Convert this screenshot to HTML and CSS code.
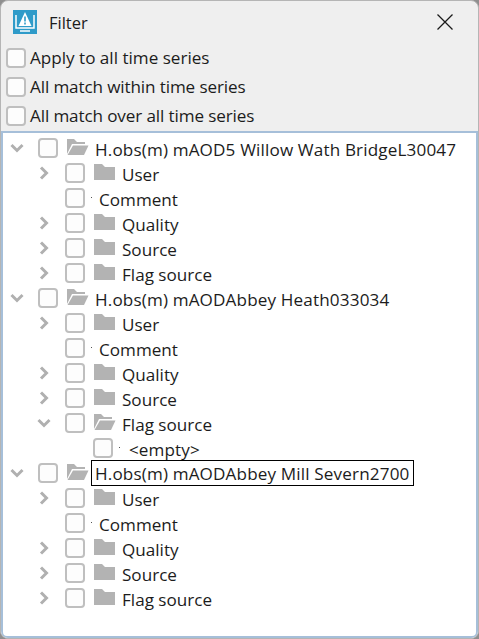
FILE: index.html
```html
<!DOCTYPE html>
<html lang="en">
<head>
    <meta charset="UTF-8">
    <title>Filter</title>
    <link rel="stylesheet" href="styles.css">
</head>
<body>
<svg width="0" height="0" class="defs">
    <symbol id="chev-right" viewBox="0 0 14 14"><path d="M4 1.500 9.500 7 4 12.500" fill="none" stroke="#b0b0b0" stroke-width="3"/></symbol>
    <symbol id="chev-down" viewBox="0 0 14 14"><path d="M1.500 4 7 9.500 12.500 4" fill="none" stroke="#b0b0b0" stroke-width="3"/></symbol>
    <symbol id="folder" viewBox="0 0 23 18"><path d="M1 1h8l3 3h10v13H1z" fill="#b3b3b3"/></symbol>
    <symbol id="folder-open" viewBox="0 0 23 18"><path d="M1 16V1h7l3 3h8v2H6z" fill="#b3b3b3"/><path d="M7 7.500h15.500L18 17H1.500z" fill="#b3b3b3"/></symbol>
</svg>
<div class="window">
    <header class="titlebar">
        <svg class="app-icon" width="24" height="24" viewBox="0 0 24 24">
            <rect width="24" height="24" fill="#2f9bc9"/>
            <path d="M3 5v13h18V5" fill="none" stroke="#fff" stroke-width="1.500"/>
            <path d="M7 21h10" stroke="#fff" stroke-width="1.500"/>
            <path d="M12 2 18.500 16h-13z" fill="#fff"/>
            <path d="M12 6.500v5M12 12.500v2" stroke="#2f9bc9" stroke-width="1.600"/>
        </svg>
        <span class="title">Filter</span>
        <svg class="close" width="16" height="16" viewBox="0 0 16 16"><path d="M.5.500l15 15M15.500.500l-15 15" stroke="#1a1a1a" stroke-width="1.300"/></svg>
    </header>

    <div class="options">
        <label class="option"><span class="check"></span>Apply to all time series</label>
        <label class="option tight"><span class="check"></span>All match within time series</label>
        <label class="option tight"><span class="check"></span>All match over all time series</label>
    </div>

    <ul class="tree">
        <li class="row lvl0"><svg class="chev"><use href="#chev-down"/></svg><span class="check"></span><svg class="folder"><use href="#folder-open"/></svg><span class="label">H.obs(m) mAOD5 Willow Wath BridgeL30047</span></li>
        <li class="row lvl1"><svg class="chev"><use href="#chev-right"/></svg><span class="check"></span><svg class="folder"><use href="#folder"/></svg><span class="label">User</span></li>
        <li class="row lvl1"><span class="chev"></span><span class="check"></span><span class="dot"></span><span class="label">Comment</span></li>
        <li class="row lvl1"><svg class="chev"><use href="#chev-right"/></svg><span class="check"></span><svg class="folder"><use href="#folder"/></svg><span class="label">Quality</span></li>
        <li class="row lvl1"><svg class="chev"><use href="#chev-right"/></svg><span class="check"></span><svg class="folder"><use href="#folder"/></svg><span class="label">Source</span></li>
        <li class="row lvl1"><svg class="chev"><use href="#chev-right"/></svg><span class="check"></span><svg class="folder"><use href="#folder"/></svg><span class="label">Flag source</span></li>

        <li class="row lvl0"><svg class="chev"><use href="#chev-down"/></svg><span class="check"></span><svg class="folder"><use href="#folder-open"/></svg><span class="label">H.obs(m) mAODAbbey Heath033034</span></li>
        <li class="row lvl1"><svg class="chev"><use href="#chev-right"/></svg><span class="check"></span><svg class="folder"><use href="#folder"/></svg><span class="label">User</span></li>
        <li class="row lvl1"><span class="chev"></span><span class="check"></span><span class="dot"></span><span class="label">Comment</span></li>
        <li class="row lvl1"><svg class="chev"><use href="#chev-right"/></svg><span class="check"></span><svg class="folder"><use href="#folder"/></svg><span class="label">Quality</span></li>
        <li class="row lvl1"><svg class="chev"><use href="#chev-right"/></svg><span class="check"></span><svg class="folder"><use href="#folder"/></svg><span class="label">Source</span></li>
        <li class="row lvl1"><svg class="chev"><use href="#chev-down"/></svg><span class="check"></span><svg class="folder"><use href="#folder-open"/></svg><span class="label">Flag source</span></li>
        <li class="row lvl2"><span class="check"></span><span class="dot"></span><span class="label">&lt;empty&gt;</span></li>

        <li class="row lvl0"><svg class="chev"><use href="#chev-down"/></svg><span class="check"></span><svg class="folder"><use href="#folder-open"/></svg><span class="label selected">H.obs(m) mAODAbbey Mill Severn2700</span></li>
        <li class="row lvl1"><svg class="chev"><use href="#chev-right"/></svg><span class="check"></span><svg class="folder"><use href="#folder"/></svg><span class="label">User</span></li>
        <li class="row lvl1"><span class="chev"></span><span class="check"></span><span class="dot"></span><span class="label">Comment</span></li>
        <li class="row lvl1"><svg class="chev"><use href="#chev-right"/></svg><span class="check"></span><svg class="folder"><use href="#folder"/></svg><span class="label">Quality</span></li>
        <li class="row lvl1"><svg class="chev"><use href="#chev-right"/></svg><span class="check"></span><svg class="folder"><use href="#folder"/></svg><span class="label">Source</span></li>
        <li class="row lvl1"><svg class="chev"><use href="#chev-right"/></svg><span class="check"></span><svg class="folder"><use href="#folder"/></svg><span class="label">Flag source</span></li>
    </ul>
</div>
</body>
</html>
```

FILE: styles.css
```css
html, body {
    margin: 0;
    height: 100%;
    background: #8f8f8f;
}
body {
    font-family: "Open Sans", "Noto Sans", sans-serif;
    font-size: 17.1px;
    color: #1c1c1c;
    overflow: hidden;
}
.defs {
    position: absolute;
}
.window {
    height: 639px;
    box-sizing: border-box;
    background: #efefef;
    border: 1px solid #b5b5b5;
    border-radius: 8px;
    display: flex;
    flex-direction: column;
    overflow: hidden;
}
.titlebar {
    height: 42px;
    flex: none;
    display: flex;
    align-items: center;
    padding: 0 25px 0 12px;
}
.title {
    margin-left: 12px;
    flex: 1;
    font-size: 16.500px;
}
.options {
    flex: none;
    padding: 0 0 1px 5px;
}
.option {
    height: 29px;
    display: flex;
    align-items: center;
    gap: 4px;
}
.tight {
    letter-spacing: -.12px;
}
.check {
    width: 20px;
    height: 20px;
    flex: none;
    box-sizing: border-box;
    background: #fdfdfd;
    border: 2px solid #bfbfbf;
    border-radius: 4px;
}
.tree {
    flex: 1;
    list-style: none;
    margin: 0;
    padding: 2px 0 0;
    background: #fff;
    border: 2px solid #a6bfd9;
    border-radius: 0 0 6px 6px;
}
.row {
    height: 25px;
    display: flex;
    align-items: center;
}
.lvl0 { padding-left: 7px; }
.lvl1 { padding-left: 34px; }
.lvl2 { padding-left: 90px; }
.chev {
    width: 14px;
    height: 14px;
    flex: none;
    margin-right: 14px;
}
.folder {
    width: 23px;
    height: 18px;
    flex: none;
    margin-left: 8px;
    margin-bottom: 1px;
}
.dot {
    width: 1px;
    height: 1px;
    flex: none;
    margin: 0 0 0 6px;
    background: #555;
}
.label {
    margin-left: 7px;
    padding-top: 4px;
    white-space: nowrap;
}
.folder + .label {
    margin-left: 6px;
}
.lvl0 .label {
    letter-spacing: .15px;
}
.lvl2 .label {
    margin-left: 9px;
    letter-spacing: .1px;
}
.lvl0 .selected {
    margin-left: 2px;
    padding: 2px 3px 0;
    border: 1px solid #000;
    line-height: 22px;
}
```
